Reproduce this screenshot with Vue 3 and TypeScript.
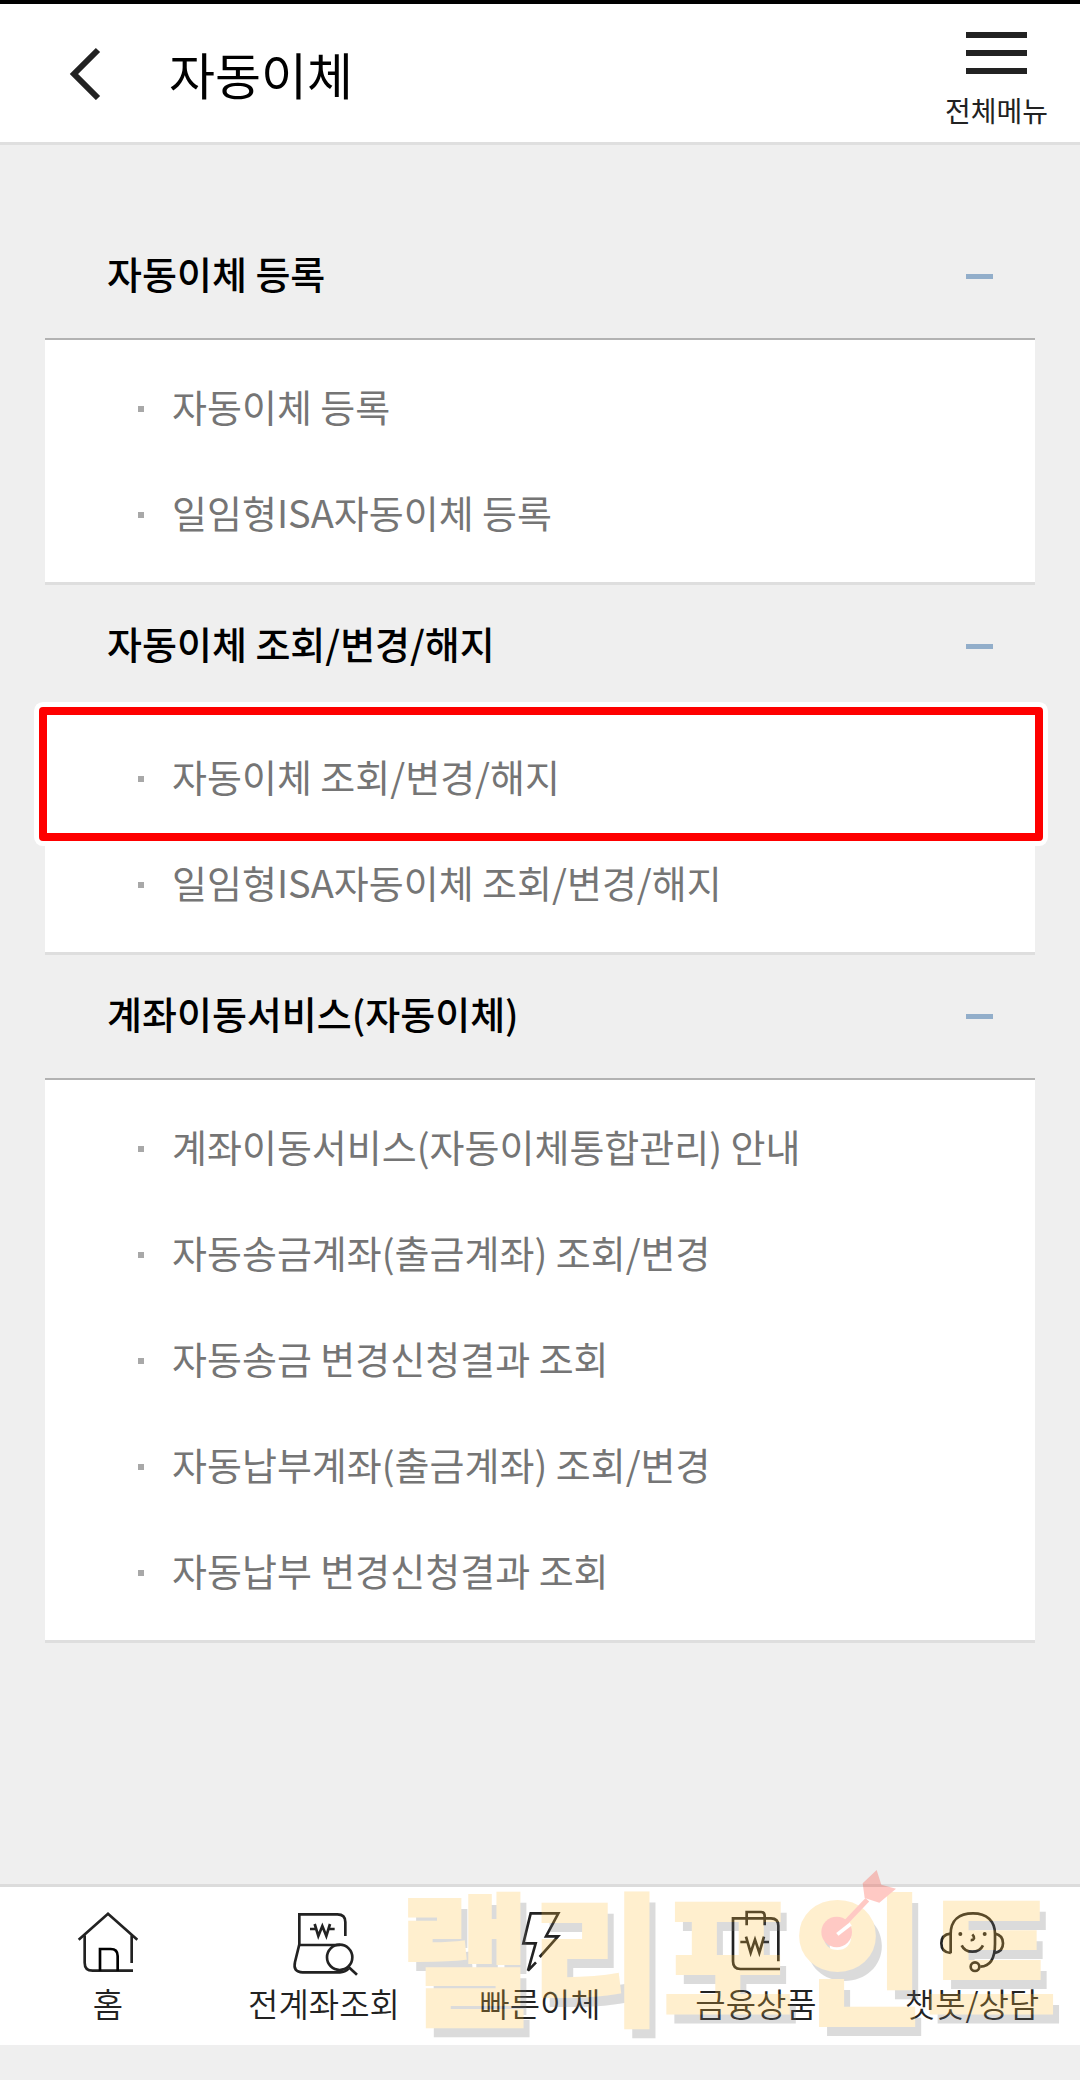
<script setup lang="ts">
import { ref } from 'vue'

interface MenuItem {
  label: string
  highlighted?: boolean
}

interface MenuSection {
  id: string
  title: string
  items: MenuItem[]
}

const sections: MenuSection[] = [
  {
    id: 'register',
    title: '자동이체 등록',
    items: [{ label: '자동이체 등록' }, { label: '일임형ISA자동이체 등록' }],
  },
  {
    id: 'manage',
    title: '자동이체 조회/변경/해지',
    items: [
      { label: '자동이체 조회/변경/해지', highlighted: true },
      { label: '일임형ISA자동이체 조회/변경/해지' },
    ],
  },
  {
    id: 'switch',
    title: '계좌이동서비스(자동이체)',
    items: [
      { label: '계좌이동서비스(자동이체통합관리) 안내' },
      { label: '자동송금계좌(출금계좌) 조회/변경' },
      { label: '자동송금 변경신청결과 조회' },
      { label: '자동납부계좌(출금계좌) 조회/변경' },
      { label: '자동납부 변경신청결과 조회' },
    ],
  },
]

const closed = ref<string[]>([])

function toggle(id: string): void {
  closed.value = closed.value.includes(id)
    ? closed.value.filter((c) => c !== id)
    : [...closed.value, id]
}
</script>

<template>
  <div class="screen">
    <header class="topbar">
      <button class="back" type="button" aria-label="뒤로">
        <svg width="32" height="54" viewBox="0 0 32 54" aria-hidden="true">
          <path d="M29 4 L5 28 L29 52" fill="none" stroke="#222" stroke-width="6" />
        </svg>
      </button>
      <h1 class="title">자동이체</h1>
      <button class="all-menu" type="button">
        <span class="bars" aria-hidden="true"><i></i><i></i><i></i></span>
        <span>전체메뉴</span>
      </button>
    </header>

    <main class="content">
      <section v-for="s in sections" :key="s.id">
        <h2 class="section-head">
          <button
            type="button"
            class="section-toggle"
            :aria-expanded="!closed.includes(s.id)"
            @click="toggle(s.id)"
          >
            <span class="section-title">{{ s.title }}</span>
            <span class="minus" aria-hidden="true"></span>
          </button>
        </h2>
        <ul v-if="!closed.includes(s.id)" class="card">
          <li
            v-for="item in s.items"
            :key="item.label"
            class="row"
            :class="{ highlighted: item.highlighted }"
          >
            <a href="#" class="row-link"><span class="row-label">{{ item.label }}</span></a>
          </li>
        </ul>
      </section>
    </main>

    <nav class="tabs">
      <a href="#" class="tab">
        <svg class="icon" viewBox="105 117 198 198" aria-hidden="true">
          <path d="M116 209 L204 131 L292 209" />
          <path d="M134 196 V278 Q134 302 158 302 H279" />
          <path d="M275 196 V279" />
          <path d="M180 302 V237 H212 Q233 237 233 258 V302" stroke="#000" />
        </svg>
        <span>홈</span>
      </a>
      <a href="#" class="tab">
        <svg class="icon" viewBox="753 117 198 198" aria-hidden="true">
          <path d="M916 198 V156 Q916 133 892 133 H778 V223 L765 276 Q758 306 788 307 H900 Q915 307 926 296" />
          <path d="M778 225 H900" />
          <circle cx="899" cy="262" r="38" />
          <path d="M925 290 L951 314" />
          <path d="M810 177 H828 M866 177 H884 M824 162 L835 198 L847 168 L859 198 L870 162" />
        </svg>
        <span>전계좌조회</span>
      </a>
      <a href="#" class="tab">
        <svg class="icon" viewBox="321 147 198 198" aria-hidden="true">
          <path d="M419 291 L474 229 H438 L475 160 H392 L370 250 H407 L384 332 L408 307" />
        </svg>
        <span>빠른이체</span>
      </a>
      <a href="#" class="tab">
        <svg class="icon" viewBox="249 147 198 198" aria-hidden="true">
          <path d="M415 304 V197 Q415 175 393 175 H279 V304 Q279 327 301 327 H420" />
          <path d="M320 196 V156 H363 Q374 156 374 168 V196" />
          <path d="M301 246 H322 M367 246 H387 M318 230 L332 278 L345 239 L358 278 L372 230" />
        </svg>
        <span>금융상품</span>
      </a>
      <a href="#" class="tab">
        <svg class="icon" viewBox="357 147 198 198" aria-hidden="true">
          <path d="M392 280 V222 C392 180 418 160 459 160 C500 160 525 182 525 222 V252 C525 298 508 319 481 320" />
          <path d="M392 221 Q364 224 364 250 Q364 278 392 279" />
          <path d="M525 221 Q549 226 549 250 Q549 274 525 279" />
          <circle cx="465" cy="320" r="13" />
          <path d="M425 256 Q434 275 457 275 Q480 275 489 256" />
          <path d="M457 223 Q463 229 462 235 Q460 241 452 240" />
          <circle class="dot" cx="421" cy="222" r="6" />
          <circle class="dot" cx="494" cy="222" r="6" />
        </svg>
        <span>챗봇/상담</span>
      </a>

      <div class="watermark" aria-hidden="true">
        랠리포인트
        <svg class="dart" viewBox="0 30 234 240">
          <circle cx="50" cy="222" r="46" fill="#ff2d1a" />
          <path d="M50 222 L142 125" stroke="#ff2d1a" stroke-width="15" />
          <path d="M52 229 L92 198" stroke="#fff" stroke-width="11" />
          <path d="M128 76 L170 36 L184 80 L228 92 L178 134 L134 120 Z" fill="#ff2d1a" />
        </svg>
      </div>
    </nav>
  </div>
</template>

<style>
body {
  margin: 0;
  background: #efefef;
}
</style>

<style scoped>
.screen {
  display: flex;
  flex-direction: column;
  min-height: 100vh;
  box-sizing: border-box;
  padding-bottom: 35px;
  border-top: 4px solid #000;
  background: #efefef;
  color: #222;
  font-family: 'Noto Sans CJK KR', sans-serif;
}

button {
  padding: 0;
  border: 0;
  background: none;
  color: inherit;
  font: inherit;
  cursor: pointer;
}

a {
  color: inherit;
  text-decoration: none;
}

.topbar {
  display: flex;
  align-items: center;
  height: 138px;
  padding: 0 32px 0 69px;
  border-bottom: 3px solid #dfdfdf;
  background: #fff;
}

.back {
  display: flex;
  width: 100px;
}

.title {
  flex: 1;
  margin: 0;
  color: #000;
  font-size: 50px;
  font-weight: 400;
  line-height: 72px;
}

.all-menu {
  display: flex;
  flex-direction: column;
  align-items: center;
  gap: 16px;
  padding-top: 16px;
  font-size: 28px;
  line-height: 40px;
}

.bars {
  display: flex;
  flex-direction: column;
  gap: 12px;
  width: 61px;
}

.bars i {
  height: 6px;
  background: #222;
}

.content {
  flex: 1;
  padding: 70px 45px 100px;
}

.section-head {
  margin: 0;
  font-size: 38px;
  font-weight: 500;
  line-height: 56px;
}

.section-toggle {
  display: flex;
  align-items: center;
  justify-content: space-between;
  width: 100%;
  height: 123px;
  padding: 0 42px 0 62px;
  color: #000;
}

.section-title {
  padding-bottom: 8px;
}

.minus {
  width: 27px;
  height: 5px;
  background: #92aeca;
}

.card {
  margin: 0;
  padding: 16px 0 14px;
  border-top: 2px solid #b2b2b2;
  border-bottom: 3px solid #dedede;
  background: #fff;
  list-style: none;
}

.row {
  position: relative;
}

.row-link {
  display: flex;
  align-items: center;
  gap: 28px;
  height: 106px;
  padding-left: 93px;
  color: #757575;
  font-size: 38px;
  line-height: 56px;
}

.row-link::before {
  content: '';
  width: 6px;
  height: 6px;
  background: #a8a8a8;
}

.row-label {
  padding-bottom: 6px;
}

.highlighted::after {
  content: '';
  position: absolute;
  inset: -19px -8px -9px -6px;
  border: 8px solid #fe0000;
  border-radius: 4px;
  box-shadow: 0 0 0 5px #fff;
  pointer-events: none;
}

.tabs {
  position: relative;
  display: flex;
  padding: 22px 0 20px;
  border-top: 3px solid #dcdcdc;
  background: #fff;
}

.tab {
  flex: 1;
  display: flex;
  flex-direction: column;
  align-items: center;
  gap: 6px;
  font-size: 33px;
  font-weight: 350;
  line-height: 44px;
}

.icon {
  width: 66px;
  height: 66px;
  overflow: visible;
  fill: none;
  stroke: #222;
  stroke-width: 8;
}

.icon .dot {
  fill: #222;
  stroke: none;
}

.watermark {
  position: absolute;
  right: 23px;
  bottom: 13px;
  color: #ffc040;
  font-size: 143px;
  font-weight: 900;
  line-height: 160px;
  white-space: nowrap;
  text-shadow: 7px 10px 0 #747474;
  -webkit-text-stroke: 2px #ffc040;
  opacity: 0.25;
  pointer-events: none;
}

.dart {
  position: absolute;
  right: 159px;
  top: -4px;
  width: 78px;
  height: 80px;
}
</style>
